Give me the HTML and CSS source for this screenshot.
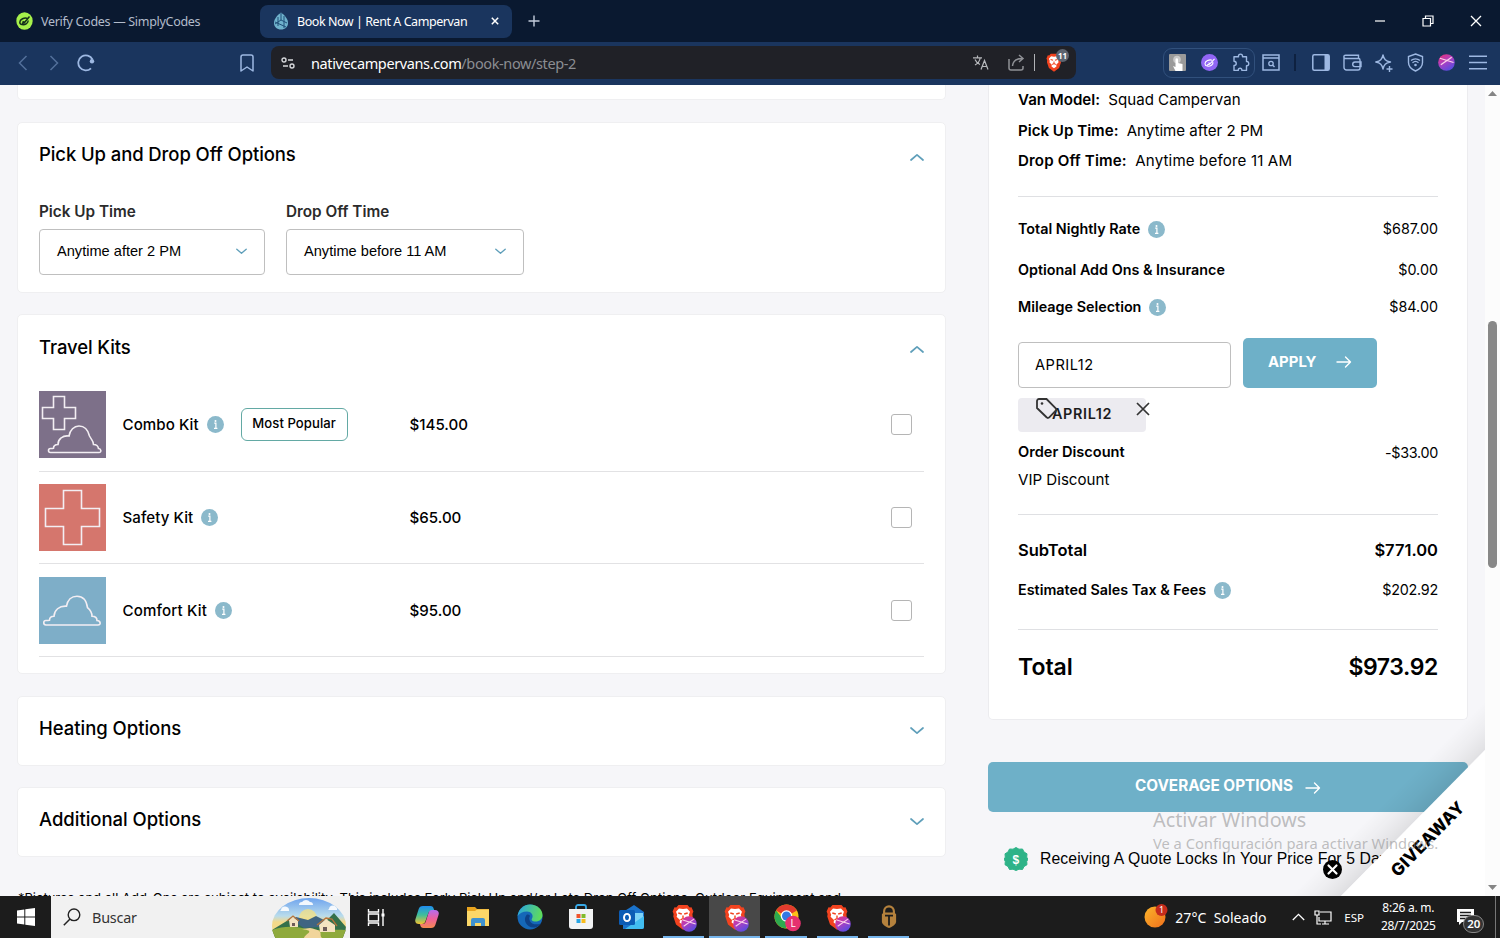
FILE: index.html
```
<!DOCTYPE html>
<html lang="en">
<head>
    <meta charset="UTF-8">
    <meta name="viewport" content="width=device-width, initial-scale=1.0">
    <title>Book Now | Rent A Campervan</title>
    <link rel="stylesheet" href="styles.css">
</head>
<body>
    <!-- shared icons -->
    <svg class="sprite" width="0" height="0">
        <defs>
            <linearGradient id="ball" x1="0" y1="0" x2="0.6" y2="1">
                <stop offset="0" stop-color="#f0306f"/>
                <stop offset="0.5" stop-color="#b03fc0"/>
                <stop offset="1" stop-color="#5b4be0"/>
            </linearGradient>
            <linearGradient id="copA" x1="0" y1="0" x2="0" y2="1">
                <stop offset="0" stop-color="#1f8df0"/>
                <stop offset="0.5" stop-color="#3fbf9a"/>
                <stop offset="1" stop-color="#f2c230"/>
            </linearGradient>
            <linearGradient id="copB" x1="0" y1="0" x2="0" y2="1">
                <stop offset="0" stop-color="#b56cf0"/>
                <stop offset="0.5" stop-color="#f0609a"/>
                <stop offset="1" stop-color="#f58a50"/>
            </linearGradient>
            <linearGradient id="edge" x1="0" y1="0.2" x2="1" y2="0.4">
                <stop offset="0" stop-color="#2aa5e0"/>
                <stop offset="1" stop-color="#5fdc5a"/>
            </linearGradient>
            <linearGradient id="sky" x1="0" y1="0" x2="0" y2="1">
                <stop offset="0" stop-color="#6fa4ee"/>
                <stop offset="0.45" stop-color="#b9dcec"/>
                <stop offset="0.6" stop-color="#f3d98a"/>
            </linearGradient>
            <linearGradient id="sun" x1="0" y1="0" x2="1" y2="1">
                <stop offset="0" stop-color="#fbb42a"/>
                <stop offset="1" stop-color="#f0701c"/>
            </linearGradient>
        </defs>
        <symbol id="info" viewBox="0 0 17 17">
            <circle cx="8.5" cy="8.5" r="8.5" fill="#8bb9cb"/>
            <path d="M7.200 7.200h1.700v5M7 12.300h3.400" fill="none" stroke="#fff" stroke-width="1.200"/>
            <circle cx="8.500" cy="4.900" r="1" fill="#fff"/>
        </symbol>
        <symbol id="up" viewBox="0 0 14 8"><path d="M1 7l6-5.2L13 7" fill="none" stroke="#5f9fba" stroke-width="1.7" stroke-linecap="round" stroke-linejoin="round"/></symbol>
        <symbol id="down" viewBox="0 0 14 8"><path d="M1 1l6 5.2L13 1" fill="none" stroke="#5f9fba" stroke-width="1.7" stroke-linecap="round" stroke-linejoin="round"/></symbol>
        <symbol id="arrow" viewBox="0 0 16 12"><path d="M1 6h13.500M9.500 1l5 5-5 5" fill="none" stroke="#fff" stroke-width="1.4" stroke-linecap="round" stroke-linejoin="round"/></symbol>
        <symbol id="pinkball" viewBox="0 0 18 18">
            <circle cx="9" cy="9" r="8.8" fill="url(#ball)"/>
            <path d="M2 4.500L16.500 9M3 11.500L14.500 3.500" fill="none" stroke="#fbd0ea" stroke-width="1.300"/>
        </symbol>
        <symbol id="lion" viewBox="0 0 22 26">
            <path d="M6.500 1h9l2.200 2.400 1.800-.2 1.900 4.300-1 2.500.3 2.500-2.700 8-7 5.300-7-5.300-2.700-8 .3-2.500-1-2.500 1.900-4.300 1.800.2z" fill="#f2431f"/>
            <path d="M11 5l4-.6 3 3.400-1.200 3 .6 2-3.400 3.200.4 2.400L11 21l-3.400-2.600.4-2.400-3.400-3.200.6-2L4 7.800l3-3.400z" fill="#fff"/>
            <path d="M6.300 9l3.500 1M15.700 9l-3.500 1M11 11.500v3M8.500 15.800l2.500-1.300 2.500 1.300" stroke="#f2431f" stroke-width="1.400" fill="none"/>
        </symbol>
        <symbol id="brave" viewBox="0 0 28 30">
            <use href="#lion" x="2" y="1" width="22" height="26"/>
            <use href="#pinkball" x="11" y="13" width="16" height="16"/>
        </symbol>
    </svg>

    <div class="tabs">
        <div class="tab">
            <svg width="17" height="18" viewBox="0 0 17 18"><ellipse cx="8.500" cy="9" rx="8.200" ry="8.800" fill="#a6f14b"/><path d="M13.500 4.500L8.500 10.500 6.500 9.500M11.500 6.500C8.500 5 3.800 7.500 3.800 10.200s4 3.300 6.700 1.500c1.500-1 1.800-2.200 1.500-3.200M6 11.500l3-1" fill="none" stroke="#14301a" stroke-width="1.500"/></svg>
            <span class="tab-title">Verify Codes — SimplyCodes</span>
        </div>
        <div class="tab tab-active">
            <svg width="16" height="18" viewBox="0 0 16 18"><path d="M8 .5c4 3 7 6.500 7 10.500 0 4-3 6.500-7 6.500s-7-2.500-7-6.500C1 7 4 3.500 8 .5z" fill="#6fb2cd"/><path d="M8 1v7L2 12M8 8l6 3M5 5v9M11 4v12M2 10l11 5" stroke="#1f4f78" stroke-width="1" fill="none"/></svg>
            <span class="tab-title">Book Now | Rent A Campervan</span>
            <svg class="tab-close" width="8" height="8" viewBox="0 0 8 8"><path d="M.8.8l6.400 6.400M7.200.8L.8 7.200" stroke="#fff" stroke-width="1.500"/></svg>
        </div>
        <svg class="tab-new" width="12" height="12" viewBox="0 0 12 12"><path d="M6 .5v11M.5 6h11" stroke="#c4cddc" stroke-width="1.400"/></svg>
        <div class="win-buttons">
            <svg width="12" height="12" viewBox="0 0 12 12"><path d="M1 6h10" stroke="#fff" stroke-width="1.200"/></svg>
            <svg width="12" height="12" viewBox="0 0 12 12"><path d="M1 3.500h7.500V11H1zM3.500 3.500V1H11v7.500H8.500" fill="none" stroke="#fff" stroke-width="1.200"/></svg>
            <svg width="12" height="12" viewBox="0 0 12 12"><path d="M1 1l10 10M11 1L1 11" stroke="#fff" stroke-width="1.300"/></svg>
        </div>
    </div>

    <div class="toolbar">
        <div class="nav">
            <svg width="10" height="16" viewBox="0 0 10 16"><path d="M8.500 1L1.500 8l7 7" fill="none" stroke="#53709a" stroke-width="1.500"/></svg>
            <svg width="10" height="16" viewBox="0 0 10 16"><path d="M1.500 1l7 7-7 7" fill="none" stroke="#53709a" stroke-width="1.500"/></svg>
            <svg width="18" height="18" viewBox="0 0 18 18"><path d="M15.500 5.500A7.500 7.500 0 1 0 14 14.300" fill="none" stroke="#9db8e2" stroke-width="1.800"/><circle cx="15" cy="7.200" r="2.200" fill="#9db8e2"/></svg>
        </div>
        <svg class="bookmark" width="14" height="18" viewBox="0 0 14 18"><path d="M3 1h8a2 2 0 0 1 2 2v14l-6-4-6 4V3a2 2 0 0 1 2-2z" fill="none" stroke="#9db8e2" stroke-width="1.500" stroke-linejoin="round"/></svg>
        <div class="address">
            <svg width="14" height="12" viewBox="0 0 14 12"><circle cx="3" cy="3" r="2" fill="none" stroke="#d5d7da" stroke-width="1.400"/><circle cx="11" cy="9" r="2" fill="none" stroke="#d5d7da" stroke-width="1.400"/><path d="M7 3h5M2 9h5" stroke="#d5d7da" stroke-width="1.400"/></svg>
            <span class="url"><b>nativecampervans.com</b>/book-now/step-2</span>
            <svg width="16" height="15" viewBox="0 0 16 15"><path d="M0 2.800h9M4.500.5v2.300M2 10c3-1.500 4.800-4 5.200-7.200M2 4.500c1 2.500 3 4 5 5M8 14.500l3.500-9 3.500 9M9.200 11.500h4.700" fill="none" stroke="#b6b8bc" stroke-width="1.200"/></svg>
            <svg class="share" width="17" height="17" viewBox="0 0 17 17"><path d="M1 5v9a2 2 0 0 0 2 2h10a2 2 0 0 0 2-2v-2M4.500 12c.5-5 4-7.500 9.500-7.500M11 1l4 3.500-4 3.500" fill="none" stroke="#8f9196" stroke-width="1.500"/></svg>
            <span class="bar"></span>
            <span class="shield">
                <svg width="16" height="19" viewBox="0 0 22 26"><use href="#lion"/></svg>
                <span class="shield-count">11</span>
            </span>
        </div>
        <div class="extensions">
            <span><svg width="17" height="17" viewBox="0 0 17 17"><rect width="17" height="17" rx="1" fill="#9a9a9a"/><circle cx="8" cy="5.500" r="3.800" fill="#c9c9c9"/><path d="M6.500 5.500a1.200 1.200 0 0 1 2.500 0V9l4.500 1v7H6.500L4 12l2.500 1z" fill="#fff"/></svg></span>
            <span><svg width="17" height="17" viewBox="0 0 17 17"><circle cx="8.500" cy="8.500" r="8.500" fill="#9166f5"/><path d="M13.500 4.800L9 9.800 7.500 8.800M11 6.200C8.500 5 4 7.200 4 9.700s3.800 3.300 6.500 1.500c1.500-1 1.700-2.200 1.300-3.200M6 11l3-1" fill="none" stroke="#fff" stroke-width="1.100"/></svg></span>
            <span><svg width="19" height="19" viewBox="0 0 19 19"><path d="M3 3.800h4c-.6-3.600 4.600-3.600 4 0h4.500v4.400c-3 .2-3 4.200 0 4.200v5h-4.300c.5-2.800-4-2.800-3.500 0H3v-4.700c-3 .5-3-4.600 0-4.200z" transform="matrix(-1 0 0 1 18.500 0)" fill="none" stroke="#9db8e2" stroke-width="1.400" stroke-linejoin="round"/></svg></span>
        </div>
        <div class="tools">
            <span><svg width="18" height="17" viewBox="0 0 18 17"><path d="M1 1h16v15H1zM1 4h16" fill="none" stroke="#9db8e2" stroke-width="1.500"/><circle cx="9" cy="9.500" r="2.200" fill="none" stroke="#9db8e2" stroke-width="1.300"/><path d="M10.500 11l2 2" stroke="#9db8e2" stroke-width="1.400"/></svg></span>
            <i class="tools-bar"></i>
            <span><svg width="18" height="17" viewBox="0 0 18 17"><rect x=".8" y=".8" width="16.400" height="15.400" rx="1.500" fill="none" stroke="#9db8e2" stroke-width="1.500"/><path d="M12.500 1H17v15h-4.500z" fill="#9db8e2"/></svg></span>
            <span><svg width="19" height="17" viewBox="0 0 19 17"><path d="M1 3v10.500A2.500 2.500 0 0 0 3.500 16H15a2 2 0 0 0 2-2V6a1.500 1.500 0 0 0-1.500-1.500H2.500A1.500 1.500 0 0 1 2.500 1.200H15.500V4M18 8h-6a2.300 2.300 0 0 0 0 4.600h6z" fill="none" stroke="#9db8e2" stroke-width="1.400"/></svg></span>
            <span><svg width="18" height="18" viewBox="0 0 18 18"><path d="M8 1c1 4.500 2.500 6 7.500 7-5 1-6.500 2.500-7.500 7C7 10.500 5.500 9 .8 8 5.500 7 7 5.500 8 1zM14.500 12v6M11.500 15h6" fill="none" stroke="#9db8e2" stroke-width="1.400" stroke-linejoin="round"/></svg></span>
            <span><svg width="17" height="19" viewBox="0 0 17 19"><path d="M8.500 1l7 2.500v6c0 4.500-3.500 7-7 8.500-3.500-1.500-7-4-7-8.500v-6z" fill="none" stroke="#9db8e2" stroke-width="1.400"/><path d="M4 7.500c2.500-2.300 6.500-2.300 9 0M5.500 9.700c1.800-1.600 4.200-1.600 6 0" fill="none" stroke="#9db8e2" stroke-width="1.300"/><circle cx="8.500" cy="12" r="1.300" fill="#9db8e2"/></svg></span>
            <span><svg width="17" height="17"><use href="#pinkball"/></svg></span>
            <span><svg width="18" height="15" viewBox="0 0 18 15"><path d="M0 1.200h18M0 7.500h18M0 13.800h18" stroke="#9db8e2" stroke-width="1.500"/></svg></span>
        </div>
    </div>

    <div class="page">
        <main class="options">
            <section class="card card-cut"></section>

            <section class="card card-times">
                <div class="card-head"><h2>Pick Up and Drop Off Options</h2><svg width="14" height="8"><use href="#up"/></svg></div>
                <div class="fields">
                    <div class="field">
                        <label>Pick Up Time</label>
                        <div class="select">Anytime after 2 PM <svg width="11" height="7"><use href="#down"/></svg></div>
                    </div>
                    <div class="field field-wide">
                        <label>Drop Off Time</label>
                        <div class="select">Anytime before 11 AM <svg width="11" height="7"><use href="#down"/></svg></div>
                    </div>
                </div>
            </section>

            <section class="card card-kits">
                <div class="card-head"><h2>Travel Kits</h2><svg width="14" height="8"><use href="#up"/></svg></div>
                <div class="kit">
                    <svg class="kit-icon kit-combo" viewBox="0 0 67 67">
                        <path d="M14.500 5.500H25.500V16.500H36.500V27.500H25.500V38.500H14.500V27.500H3.500V16.500H14.500z"/>
                        <path d="M11.500 61.500a2 2 0 0 1 0-4c1 0 2 0 3-.3 0-2.700 2-3.700 4.500-3.700 0-3 1-5 3-6.500 2.500-2 5-2.500 8-2 1-6 5-10 10-10s9 4 10.500 10c2 4 4 5 4 8.500 3 0 4.500 1 5 4 2.500 0 3.500 4 .5 4z"/>
                    </svg>
                    <div class="kit-name">Combo Kit <svg width="17" height="17"><use href="#info"/></svg> <span class="popular">Most Popular</span></div>
                    <div class="kit-price">$145.00</div>
                    <span class="check"></span>
                </div>
                <div class="kit">
                    <svg class="kit-icon kit-safety" viewBox="0 0 67 67">
                        <path d="M24.500 6.500H42.500V24.500H60.500V42.500H42.500V60.500H24.500V42.500H6.500V24.500H24.500z"/>
                    </svg>
                    <div class="kit-name">Safety Kit <svg width="17" height="17"><use href="#info"/></svg></div>
                    <div class="kit-price">$65.00</div>
                    <span class="check"></span>
                </div>
                <div class="kit">
                    <svg class="kit-icon kit-comfort" viewBox="0 0 67 67">
                        <path d="M7 48a2.200 2.200 0 0 1 0-4.500c1 0 2 0 3.500-.3 0-3 2-4 4.500-4 .3-6 5-10.500 12.500-10 1-6 5-10 10.500-10s9.500 4 10.500 11.500c3 2.500 4.500 4.500 4.500 8.500 3 0 5 1.500 5 4.300 3.500 0 4.500 4.500 1 4.500z"/>
                    </svg>
                    <div class="kit-name kit-name-wide">Comfort Kit <svg width="17" height="17"><use href="#info"/></svg></div>
                    <div class="kit-price">$95.00</div>
                    <span class="check"></span>
                </div>
            </section>

            <section class="card card-closed"><div class="card-head"><h2>Heating Options</h2><svg width="14" height="8"><use href="#down"/></svg></div></section>
            <section class="card card-closed"><div class="card-head"><h2>Additional Options</h2><svg width="14" height="8"><use href="#down"/></svg></div></section>

            <p class="footnote">*Pictures and all Add-Ons are subject to availability. This includes Early Pick Up and/or Late Drop Off Options, Outdoor Equipment and</p>
        </main>

        <aside class="sidebar">
            <div class="summary">
                <div class="trip"><b>Van Model:</b> Squad Campervan</div>
                <div class="trip"><b>Pick Up Time:</b> Anytime after 2 PM</div>
                <div class="trip"><b>Drop Off Time:</b> Anytime before 11 AM</div>
                <hr>
                <div class="line line-rate"><b>Total Nightly Rate</b><svg width="17" height="17"><use href="#info"/></svg><span>$687.00</span></div>
                <div class="line line-addons"><b>Optional Add Ons &amp; Insurance</b><span>$0.00</span></div>
                <div class="line line-mileage"><b>Mileage Selection</b><svg width="17" height="17"><use href="#info"/></svg><span>$84.00</span></div>
                <div class="promo">
                    <div class="promo-input">APRIL12</div>
                    <div class="apply">APPLY <svg width="16" height="12"><use href="#arrow"/></svg></div>
                </div>
                <div class="coupon">
                    <svg class="coupon-tag" width="21" height="21" viewBox="0 0 21 21"><path d="M1 3a2 2 0 0 1 2-2h7.500l9.500 9.500a1.500 1.500 0 0 1 0 2L13 19.500a1.500 1.500 0 0 1-2.200 0L1 10z" fill="none" stroke="#333" stroke-width="1.800"/><circle cx="6" cy="5.500" r="1.300" fill="#333"/></svg>
                    APRIL12
                    <svg class="coupon-close" width="14" height="14" viewBox="0 0 14 14"><path d="M1 1l12 12M13 1L1 13" stroke="#333" stroke-width="1.700"/></svg>
                </div>
                <div class="line line-discount"><b>Order Discount</b><span>-$33.00</span></div>
                <div class="vip">VIP Discount</div>
                <hr>
                <div class="line line-subtotal"><b>SubTotal</b><span>$771.00</span></div>
                <div class="line line-tax"><b>Estimated Sales Tax &amp; Fees</b><svg width="17" height="17"><use href="#info"/></svg><span>$202.92</span></div>
                <hr>
                <div class="line line-total"><b>Total</b><span>$973.92</span></div>
            </div>
            <div class="coverage">COVERAGE OPTIONS <svg width="16" height="12"><use href="#arrow"/></svg></div>
            <div class="quote">
                <svg width="24" height="24" viewBox="0 0 24 24"><path d="M12 .5l3 1.700 3.500-.2 1.500 3 3 1.800-.3 3.400L24 12l-1.300 2.500.3 3.200-3 1.800-1.500 3-3.500-.3-3 1.300-3-1.300-3.500.3-1.500-3-3-1.800.3-3.200L0 12l1.300-1.800L1 6.800 4 5l1.500-3 3.500.2z" fill="#2eb388" stroke="#2eb388" stroke-linejoin="round"/><text x="12" y="16.500" text-anchor="middle" class="quote-dollar">$</text></svg>
                Receiving A Quote Locks In Your Price For 5 Days
            </div>
        </aside>

        <div class="scrollbar">
            <svg width="9" height="5" viewBox="0 0 9 5"><path d="M0 5l4.500-5L9 5z" fill="#858585"/></svg>
            <i></i>
            <svg width="9" height="5" viewBox="0 0 9 5"><path d="M0 0l4.500 5L9 0z" fill="#858585"/></svg>
        </div>

        <!-- corner ribbon -->
        <svg class="ribbon" width="245" height="246" viewBox="0 0 245 246">
            <defs><linearGradient id="shade" gradientUnits="userSpaceOnUse" x1="173" y1="173" x2="148" y2="148">
                <stop offset="0" stop-color="#000" stop-opacity="0.09"/>
                <stop offset="0.5" stop-color="#000" stop-opacity="0.035"/>
                <stop offset="1" stop-color="#000" stop-opacity="0"/>
            </linearGradient></defs>
            <path d="M20 246L245 20V100L101 246z" fill="url(#shade)"/>
            <path d="M101 246L245 100V246z" fill="#fff"/>
            <text class="ribbon-text" transform="translate(192 193) rotate(-45.500)" text-anchor="middle">GIVEAWAY</text>
        </svg>
        <div class="watermark">
            <div class="watermark-title">Activar Windows</div>
            <div class="watermark-text">Ve a Configuración para activar Windows.</div>
        </div>
        <svg class="ribbon-close" width="19" height="19" viewBox="0 0 19 19"><circle cx="9.500" cy="9.500" r="9.500" fill="#000"/><path d="M5.500 5.500l8 8M13.500 5.500l-8 8" stroke="#fff" stroke-width="2.200" stroke-linecap="round"/></svg>
    </div>

    <div class="taskbar">
        <div class="start"><svg width="18" height="18" viewBox="0 0 18 18"><path d="M0 2.500L7.300 1.500V8.500H0zM8.300 1.300L18 0v8.500H8.300zM0 9.500h7.300v7L0 15.500zM8.300 9.500H18V18l-9.700-1.300z" fill="#fff"/></svg></div>
        <div class="search">
            <svg width="18" height="18" viewBox="0 0 18 18"><circle cx="11" cy="6.800" r="5.800" fill="none" stroke="#222" stroke-width="1.400"/><path d="M7 11L.8 17.200" stroke="#222" stroke-width="1.500"/></svg>
            <span>Buscar</span>
            <svg class="scene" width="74" height="40" viewBox="0 0 74 40">
                <clipPath id="oval"><ellipse cx="37" cy="28" rx="37" ry="28"/></clipPath>
                <g clip-path="url(#oval)">
                    <rect width="74" height="40" fill="url(#sky)"/>
                    <circle cx="36" cy="20" r="9" fill="#fbe27a" opacity=".7"/>
                    <path d="M27 7h14a3 3 0 0 0-3-3 5 5 0 0 0-8 0 3 3 0 0 0-3 3zM8 13h9a4 4 0 0 0-8-1zM56 12h9a4 4 0 0 0-8-1z" fill="#fff" opacity=".9"/>
                    <path d="M14 26l10-7 12 3 8-4 16 8v6H14z" fill="#3f6482"/>
                    <path d="M0 32l18-11 14 9 16-1 14-14 12 14v11H0z" fill="#34704a"/>
                    <path d="M0 32c12-4 22-4 34-1 14 2 26 0 40 1v9H0z" fill="#8faa3c"/>
                    <path d="M30 31c14 2 4 4 2 9h18c-4-4 4-7-12-10z" fill="#f1d59b"/>
                    <path d="M17 22l4-3 5 4v6h-8zM47 27l7-6 9 6v7H48z" fill="#f4e3c0"/>
                    <path d="M15 23l6-5 6 5M45 27l9-7 6 1 5 7" fill="none" stroke="#b5743c" stroke-width="1.300"/>
                    <path d="M20 25h3v3h-3zM51 29h4v4h-4z" fill="#6d5b58"/>
                </g>
            </svg>
        </div>
        <div class="apps">
            <div class="app"><svg width="18" height="17" viewBox="0 0 18 17"><path d="M1.500 0v3h10V0M1.500 5h10v7h-10zM1.500 17v-3h10v3M16 0v17" fill="none" stroke="#fff" stroke-width="1.400"/><rect x="14.500" y="4.500" width="3" height="3" fill="#fff"/></svg></div>
            <div class="app"><svg width="24" height="24" viewBox="0 0 24 24"><path d="M8 1h7.500c2 0 2.700 1 3.200 2.700l.8 2.300H16c-1.500 0-2.300 1-2.800 2.500L10.500 16c-.6 2-1.500 3-3.500 3H4c-3 0-4.500-2-3.500-5L3.700 4C4.400 2 5.500 1 8 1z" fill="url(#copA)"/><path d="M16 23H8.500c-2 0-2.700-1-3.200-2.700L4.800 19H8c1.500 0 2.300-1 2.800-2.500L13.500 8c.6-2 1.500-3 3.500-3h3c3 0 4.500 2 3.500 5l-3.200 10c-.7 2-1.800 3-4.300 3z" fill="url(#copB)"/></svg></div>
            <div class="app"><svg width="24" height="20" viewBox="0 0 24 20"><path d="M1 0h8l2 2h12v17H1z" fill="#e8a41f"/><path d="M1 4h8l2-1.500h12V19H1z" fill="#fbd768"/><path d="M5 19v-6a2 2 0 0 1 2-2h10a2 2 0 0 1 2 2v6h-4v-3H9v3z" fill="#3f92cf"/></svg></div>
            <div class="app"><svg width="26" height="26" viewBox="0 0 26 26"><circle cx="13" cy="13" r="12.500" fill="#1568b8"/><path d="M.6 12C1.500 5 7 .5 13 .5c8 0 12.500 5.500 12.500 10.500 0 4-3 6.500-7 6.500-3.500 0-4.500-1.500-3.500-3 2-3.500-1-7-5-7-4.500 0-7.500 2-9.400 4.500z" fill="url(#edge)"/><path d="M9.500 11c-4 5 0 13 8 12.500 3-.3 5-2 6.500-4-4 1.500-10 1.500-11.500-3.500-.6-2 0-3 .5-4.200-1-1.200-2.500-1.600-3.500-.8z" fill="#0d4288"/></svg></div>
            <div class="app"><svg width="24" height="26" viewBox="0 0 24 26"><path d="M7 7V3a2 2 0 0 1 2-2h6a2 2 0 0 1 2 2v4" fill="none" stroke="#38a9e6" stroke-width="1.800"/><path d="M0 5h24v17a3 3 0 0 1-3 3H3a3 3 0 0 1-3-3z" fill="#f2f3f4"/><path d="M7.500 10h4v4h-4z" fill="#f0542d"/><path d="M12.500 10h4v4h-4z" fill="#80bb2c"/><path d="M7.500 15h4v4h-4z" fill="#28a5e4"/><path d="M12.500 15h4v4h-4z" fill="#f8bb1c"/></svg></div>
            <div class="app"><svg width="26" height="25" viewBox="0 0 26 25"><path d="M4 7l11-7 10 7v15a2 2 0 0 1-2 2H4z" fill="#1a73cc"/><path d="M6 8h18v6l-9 5-9-5z" fill="#7ed3f7"/><path d="M25 9v13a2 2 0 0 1-2 2H6l19-13z" fill="#41bdf0"/><rect y="5" width="16" height="15" rx="1.500" fill="#0c5cb5"/><ellipse cx="8" cy="12.500" rx="3" ry="3.600" fill="none" stroke="#fff" stroke-width="1.900"/></svg></div>
            <div class="app app-open"><svg width="28" height="30"><use href="#brave"/></svg></div>
            <div class="app app-open app-current"><svg width="28" height="30"><use href="#brave"/></svg></div>
            <div class="app app-open"><svg width="27" height="28" viewBox="0 0 27 28"><circle cx="12.500" cy="12.500" r="12" fill="#fbc116"/><path d="M12.500 12.500L2.100 6.500a12 12 0 0 1 20.800 0z" fill="#e33b2e"/><path d="M2.100 6.500a12 12 0 0 0 9.400 18l5-9.500-8-.5z" fill="#2da94f"/><circle cx="12.500" cy="12" r="5.800" fill="#fff"/><circle cx="12.500" cy="12" r="4.500" fill="#3478e5"/><circle cx="19" cy="19.500" r="7.800" fill="#e5316f"/><text x="19" y="23" text-anchor="middle" class="profile">L</text></svg></div>
            <div class="app app-open"><svg width="28" height="30"><use href="#brave"/></svg></div>
            <div class="app app-open"><svg width="16" height="24" viewBox="0 0 18 25"><path d="M3.500 9V6a5.500 5.500 0 0 1 11 0v3" fill="none" stroke="#b5823d" stroke-width="2.400"/><path d="M1 9.500l2-2h12l2 2v8c0 3-3.500 5.500-8 7.500-4.500-2-8-4.500-8-7.500z" fill="#b5823d"/><path d="M4.500 11h9M9 11v11" stroke="#1c1c1c" stroke-width="2"/></svg></div>
        </div>
        <div class="tray">
            <svg class="weather" width="25" height="26" viewBox="0 0 25 26"><circle cx="11" cy="14" r="10.500" fill="url(#sun)"/><circle cx="17.500" cy="7" r="6" fill="#c42b1c"/><text x="17.500" y="10" text-anchor="middle" class="alert">1</text></svg>
            <span class="temp">27°C&nbsp; Soleado</span>
            <svg class="tray-up" width="13" height="8" viewBox="0 0 13 8"><path d="M.8 7l5.700-5.700L12.200 7" fill="none" stroke="#fff" stroke-width="1.300"/></svg>
            <svg class="tray-net" width="18" height="15" viewBox="0 0 18 15"><path d="M6 2h11v9H5V7M8 14h7M11 11v3M1 1h4v4H1zM3 5v9h4" fill="none" stroke="#fff" stroke-width="1.200"/></svg>
            <span class="lang">ESP</span>
            <div class="clock">8:26 a. m.<br>28/7/2025</div>
            <div class="notif">
                <svg width="17" height="16" viewBox="0 0 17 16"><path d="M0 0h17v13H5l-3 3v-3H0z" fill="#fff"/><path d="M3 3.500h11M3 6.500h11M3 9.500h7" stroke="#1c1c1c" stroke-width="1.300"/></svg>
                <span>20</span>
            </div>
        </div>
    </div>
</body>
</html>
```
FILE: styles.css
```
* {
    box-sizing: border-box;
}

body {
    margin: 0;
    width: 1500px;
    height: 938px;
    overflow: hidden;
    display: flex;
    flex-direction: column;
    font-family: Inter, "Liberation Sans", sans-serif;
    color: #000;
}

svg {
    display: block;
    flex: none;
}

.sprite {
    position: absolute;
}

/* browser tabs */
.tabs {
    height: 42px;
    background: #0a1930;
    display: flex;
    align-items: center;
    padding-left: 8px;
    font-family: "Noto Sans", sans-serif;
    font-size: 12.5px;
    letter-spacing: -0.3px;
}

.tab {
    width: 252px;
    height: 33px;
    display: flex;
    align-items: center;
    padding-left: 8px;
    color: #b3bccb;
    white-space: nowrap;
}

.tab-title {
    margin-left: 8px;
}

.tab-active {
    padding-left: 13px;
    background: #1a355e;
    border-radius: 8px;
    color: #fff;
    letter-spacing: -0.45px;
}

.tab-close {
    margin-left: auto;
    margin-right: 13px;
}

.tab-new {
    margin-left: 16px;
}

.win-buttons {
    display: flex;
    gap: 36px;
    margin-left: auto;
    margin-right: 18px;
}

/* address bar */
.toolbar {
    height: 43px;
    padding-bottom: 2px;
    background: #1a355e;
    display: flex;
    align-items: center;
    font-family: "Noto Sans", sans-serif;
}

.nav {
    display: flex;
    align-items: center;
    gap: 21px;
    width: 240px;
    padding-left: 18px;
}

.nav svg:last-child {
    margin-left: -3px;
}

.address {
    width: 805px;
    height: 33px;
    margin-left: 17px;
    padding: 0 7px 0 10px;
    background: #202127;
    border-radius: 8px;
    display: flex;
    align-items: center;
}

.url {
    margin-left: 16px;
    margin-right: auto;
    font-size: 14.5px;
    letter-spacing: -0.38px;
    color: #8b8d92;
}

.url b {
    font-weight: 400;
    color: #fff;
}

.share {
    margin-left: 19px;
}

.bar {
    width: 1px;
    height: 17px;
    margin: 0 11px 0 9px;
    background: #b0b2b6;
}

.shield {
    position: relative;
    width: 23px;
}

.shield-count {
    position: absolute;
    top: -4px;
    left: 10px;
    width: 13px;
    height: 13px;
    border-radius: 50%;
    background: #5d6470;
    color: #fff;
    font-size: 8px;
    font-weight: 700;
    line-height: 13px;
    text-align: center;
}

.extensions {
    width: 92px;
    height: 30px;
    margin-left: 87px;
    border: 1px solid #31507c;
    border-radius: 9px;
    display: flex;
}

.extensions span,
.tools span {
    width: 31.4px;
    display: flex;
    align-items: center;
    justify-content: center;
}

.extensions span {
    flex: none;
}

.extensions span:first-child {
    margin-left: -2px;
}

.tools {
    display: flex;
    align-items: center;
}

.tools-bar {
    width: 2px;
    height: 17px;
    margin: 0 9px 0 8px;
    background: #0e2140;
}

/* page */
.page {
    position: relative;
    height: 811px;
    background: #f6f6f9;
    display: flex;
    overflow: hidden;
}

.options {
    width: 929px;
    margin-left: 17px;
}

.card {
    background: #fff;
    border: 1px solid #efeff1;
    border-radius: 5px;
    padding: 0 21px;
    margin-bottom: 22px;
}

.card-cut {
    height: 15px;
    border-top: 0;
    border-radius: 0 0 5px 5px;
}

.card-times {
    height: 171px;
    margin-bottom: 21px;
}

.card-kits {
    height: 360px;
}

.card-closed {
    height: 70px;
    margin-bottom: 21px;
}

.card-head {
    display: flex;
    justify-content: space-between;
    align-items: center;
    height: 62px;
}

.card-head svg {
    position: relative;
    top: 3px;
}

.card-head h2 {
    margin: 0;
    font-size: 18.5px;
    font-weight: 500;
    letter-spacing: -0.1px;
}

.card-kits .card-head {
    height: 64px;
}

.card-kits .card-head svg {
    top: 2px;
}

.card-closed h2 {
    letter-spacing: -0.03px;
}

.fields {
    display: flex;
    gap: 21px;
}

.field {
    width: 226px;
}

.field-wide {
    width: 238px;
}

.field label {
    display: block;
    margin-top: 15px;
    height: 29px;
    line-height: 24px;
    font-size: 15.3px;
    font-weight: 600;
    color: #2b2b2b;
}

.select {
    height: 46px;
    padding: 0 17px 2px;
    border: 1px solid #bfbfbf;
    border-radius: 4px;
    display: flex;
    align-items: center;
    justify-content: space-between;
    font-family: "Liberation Sans", sans-serif;
    font-size: 14.6px;
}

.kit {
    height: 92.7px;
    display: flex;
    align-items: center;
    border-bottom: 1px solid #e2e2e4;
    font-size: 15.1px;
    font-weight: 500;
}

.kit-icon {
    width: 67px;
    height: 67px;
    fill: none;
    stroke: #f3eef3;
    stroke-width: 1.6;
}

.kit-combo {
    background: #7d7089;
}

.kit-safety {
    background: #d5766d;
}

.kit-comfort {
    background: #7eaec8;
}

.kit-name {
    width: 303.5px;
    padding-left: 16.5px;
    display: flex;
    align-items: center;
    letter-spacing: 0.06px;
}

.kit-name-wide {
    letter-spacing: 0.15px;
}

.kit-name svg {
    margin-left: 8px;
}

.popular {
    width: 107px;
    height: 33px;
    margin-left: 17px;
    border: 1px solid #63a9a4;
    border-radius: 6px;
    font-size: 13.1px;
    line-height: 28px;
    text-align: center;
}

.check {
    width: 21px;
    height: 21px;
    margin-left: auto;
    margin-right: 12px;
    border: 1px solid #b5b5b5;
    border-radius: 3px;
}

.footnote {
    margin: 31px 0 0 1px;
    font-size: 13px;
    line-height: 20px;
    white-space: nowrap;
}

/* summary */
.sidebar {
    width: 480px;
    margin-left: 42px;
    font-size: 14.35px;
}

.summary {
    height: 635px;
    padding: 0 29px;
    background: #fff;
    border: 1px solid #ececef;
    border-top: 0;
    border-radius: 0 0 5px 5px;
}

.summary b {
    font-weight: 600;
}

.summary hr {
    margin: 0;
    border: 0;
    border-top: 1px solid #dfe0e3;
}

.trip {
    height: 30.7px;
    line-height: 30px;
    font-size: 15.1px;
}

.trip b {
    margin-right: 4px;
}

.trip:nth-child(3) {
    letter-spacing: 0.15px;
}

.trip + hr {
    margin-top: 19px;
}

.line {
    display: flex;
    align-items: center;
}

.line svg {
    margin-left: 8px;
    position: relative;
    top: 1px;
}

.line span {
    margin-left: auto;
}

.line-rate {
    height: 40px;
    margin-top: 11px;
}

.line-addons {
    height: 42px;
}

.line-mileage {
    height: 32px;
}

.promo {
    display: flex;
    align-items: flex-end;
    gap: 12px;
    margin-top: 16px;
}

.promo-input {
    width: 213px;
    height: 46px;
    padding-left: 16px;
    border: 1px solid #bfbfbf;
    border-radius: 4px;
    line-height: 44px;
    font-size: 14.6px;
    letter-spacing: 0.5px;
}

.apply {
    width: 134px;
    height: 50px;
    padding: 0 25px 3px 25px;
    background: #6eb0c8;
    border-radius: 5px;
    display: flex;
    align-items: center;
    justify-content: space-between;
    color: #fff;
    font-size: 14.9px;
    font-weight: 700;
}

.coupon {
    position: relative;
    width: 128px;
    height: 34px;
    margin-top: 10px;
    padding-left: 34px;
    background: #ecebf0;
    border-radius: 4px;
    line-height: 32px;
    font-size: 14.4px;
    font-weight: 600;
    letter-spacing: 0.65px;
    color: #1c1c1c;
}

.coupon-tag {
    position: absolute;
    left: 18px;
    top: 0;
}

.coupon-close {
    position: absolute;
    left: 118px;
    top: 4px;
}

.line-discount {
    height: 28px;
    margin-top: 6px;
}

.line-discount b {
    font-size: 14.6px;
}

.line-discount span {
    letter-spacing: -0.3px;
}

.vip {
    height: 27px;
    line-height: 27px;
    font-size: 15.1px;
}

.vip + hr {
    margin-top: 21px;
}

.line-subtotal {
    height: 40px;
    margin-top: 15px;
    font-size: 16.5px;
    font-weight: 600;
}

.line-tax {
    height: 39px;
}

.line-tax span {
    letter-spacing: -0.25px;
}

.line-tax + hr {
    margin-top: 20px;
}

.line-total {
    height: 73px;
    font-size: 23px;
    font-weight: 600;
}

.line-total span {
    letter-spacing: -0.4px;
}

.coverage {
    height: 50px;
    margin-top: 42px;
    padding-bottom: 3px;
    background: #6eb0c8;
    border-radius: 5px;
    display: flex;
    align-items: center;
    justify-content: center;
    gap: 12px;
    color: #fff;
    font-size: 15.3px;
    font-weight: 700;
}

.coverage svg {
    position: relative;
    top: 2px;
}

.quote {
    height: 30px;
    margin: 32px 0 0 16px;
    display: flex;
    align-items: center;
    gap: 12px;
    font-family: "Liberation Sans", sans-serif;
    font-size: 15.75px;
    letter-spacing: 0.12px;
    white-space: nowrap;
}

.quote-dollar {
    font: 700 12px "Liberation Sans", sans-serif;
    fill: #fff;
}

.scrollbar {
    width: 15px;
    margin-left: 17px;
    padding: 6px 3px;
    background: #fcfcfc;
    display: flex;
    flex-direction: column;
    align-items: center;
    position: relative;
    z-index: 2;
}

.scrollbar i {
    width: 9px;
    height: 247px;
    margin: 225px 0 auto;
    border-radius: 5px;
    background: #888;
}

.ribbon {
    position: absolute;
    left: 1240px;
    top: 565px;
}

.ribbon-text {
    font: 800 17px Inter, sans-serif;
    letter-spacing: 0.4px;
}

.ribbon-close {
    position: absolute;
    left: 1323px;
    top: 775px;
}

.watermark {
    position: absolute;
    left: 1153px;
    top: 721px;
    color: rgba(140, 140, 140, 0.55);
    font-family: "Noto Sans", sans-serif;
    white-space: nowrap;
}

.watermark-title {
    font-size: 19.8px;
    line-height: 28px;
}

.watermark-text {
    font-size: 14.7px;
    line-height: 19px;
}

/* windows taskbar */
.taskbar {
    height: 42px;
    background: #1c1c1c;
    display: flex;
    font-family: "Noto Sans", sans-serif;
    color: #fff;
}

.start {
    width: 51px;
    display: flex;
    align-items: center;
    justify-content: center;
}

.search {
    width: 299px;
    padding-left: 12px;
    background: #f1f1f1;
    display: flex;
    align-items: center;
    color: #333;
    font-size: 14.4px;
}

.search span {
    margin-left: 11px;
    letter-spacing: -0.2px;
}

.scene {
    margin-left: auto;
    margin-right: 4px;
    align-self: flex-end;
}

.apps {
    display: flex;
}

.app {
    width: 51.3px;
    display: flex;
    align-items: center;
    justify-content: center;
    position: relative;
}

.app-open::after {
    content: "";
    position: absolute;
    left: 5px;
    right: 5px;
    bottom: 0;
    height: 2px;
    background: #76b5ec;
}

.app-open svg {
    margin: 2px 0 0 2px;
}

.app-open:last-child svg {
    margin: 0;
}

.app-current {
    background: #484848;
}

.app-current::after {
    left: 0;
    right: 0;
}

.profile,
.alert {
    font: 10px "Noto Sans", sans-serif;
    fill: #fff;
}

.alert {
    font-size: 9px;
}

.tray {
    flex: 1;
    display: flex;
    align-items: center;
    padding-left: 230px;
}

.weather {
    margin-top: -2px;
}

.temp {
    margin-left: 6px;
    width: 117px;
    font-size: 14.1px;
    white-space: nowrap;
}

.tray-net {
    margin-left: 9px;
}

.lang {
    width: 20px;
    margin-left: 12px;
    font-size: 11.6px;
}

.clock {
    width: 60px;
    margin-left: 14px;
    font-size: 12px;
    letter-spacing: -0.25px;
    line-height: 18px;
    text-align: center;
    white-space: nowrap;
}

.notif {
    position: relative;
    width: 39px;
    height: 100%;
    margin-left: 19px;
    padding-top: 13px;
    border-right: 1px solid #777;
}

.notif span {
    position: absolute;
    left: 6px;
    top: 19px;
    width: 21px;
    height: 18px;
    border: 1px solid #888;
    border-radius: 9px;
    background: #333;
    font-size: 11.5px;
    font-weight: 600;
    line-height: 16px;
    text-align: center;
}
```
